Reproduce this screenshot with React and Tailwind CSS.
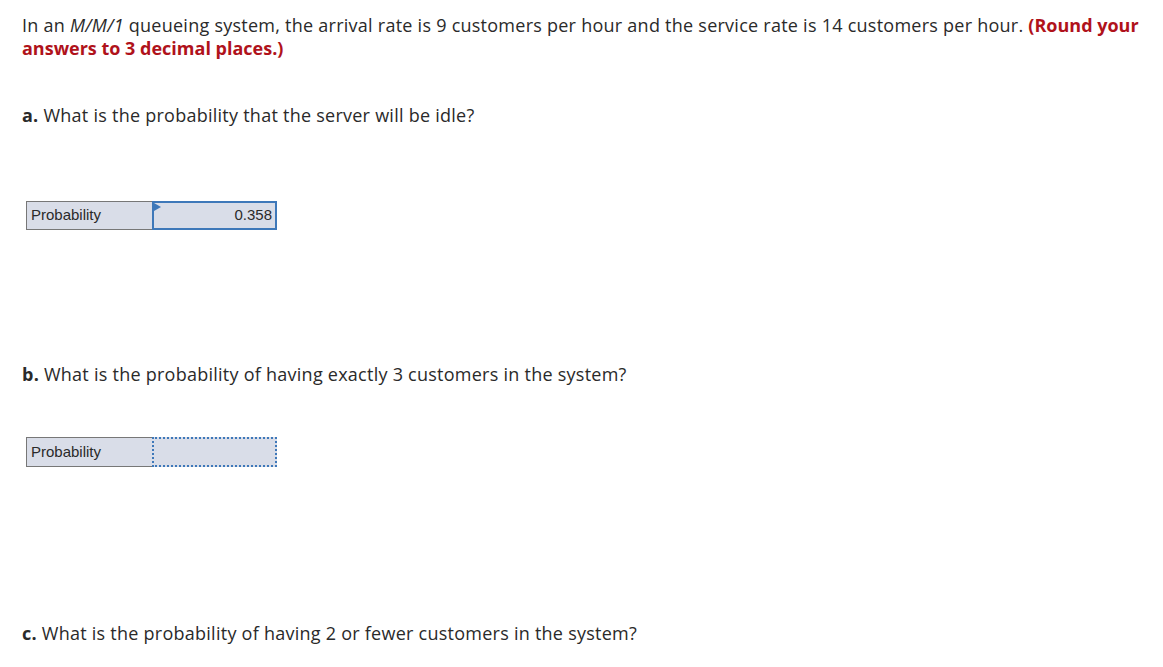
export default function App() {
  const font = { fontFamily: "'Open Sans', Lato, sans-serif" };
  return (
    <div className="w-[1163px] h-[667px] bg-white text-[#2a2a2a] overflow-hidden" style={font}>
      <div className="px-[22px] pt-[14px] text-[18px] leading-[23px] tracking-[0.25px]">
        <p className="w-[1120px]">
          In an <i>M/M/1</i> queueing system, the arrival rate is 9 customers per hour and the service rate is 14 customers per hour.{" "}
          <b className="text-[#b0121b] tracking-[0px]">(Round your answers to 3 decimal places.)</b>
        </p>
        <p className="mt-[44px]">
          <b>a.</b> What is the probability that the server will be idle?
        </p>
        <div className="mt-[74px] ml-[4px] flex w-[251px] h-[29px] text-[15px] leading-normal tracking-normal" style={{ fontFamily: "'Liberation Sans', Arial, sans-serif" }}>
          <div className="w-[126px] border border-[#777] border-r-0 bg-[#d9dde8] flex items-center pl-[4px]">Probability</div>
          <div className="relative w-[125px] border-2 border-[#3e78b9] bg-[#d9dde8] flex items-center justify-end pr-[3px]">
            0.358
            <div className="absolute left-0 top-0 w-0 h-0 border-t-[4px] border-b-[4px] border-l-[7px] border-t-transparent border-b-transparent border-l-[#3e78b9]"></div>
          </div>
        </div>
        <p className="mt-[133px]">
          <b>b.</b> What is the probability of having exactly 3 customers in the system?
        </p>
        <div className="mt-[51px] ml-[4px] flex w-[251px] h-[30px] text-[15px] leading-normal tracking-normal" style={{ fontFamily: "'Liberation Sans', Arial, sans-serif" }}>
          <div className="w-[126px] border border-[#777] border-r-0 bg-[#d9dde8] flex items-center pl-[4px]">Probability</div>
          <div className="w-[125px] border-2 border-dotted border-[#3e78b9] bg-[#d9dde8]"></div>
        </div>
        <p className="mt-[155px]">
          <b>c.</b> What is the probability of having 2 or fewer customers in the system?
        </p>
      </div>
    </div>
  );
}
